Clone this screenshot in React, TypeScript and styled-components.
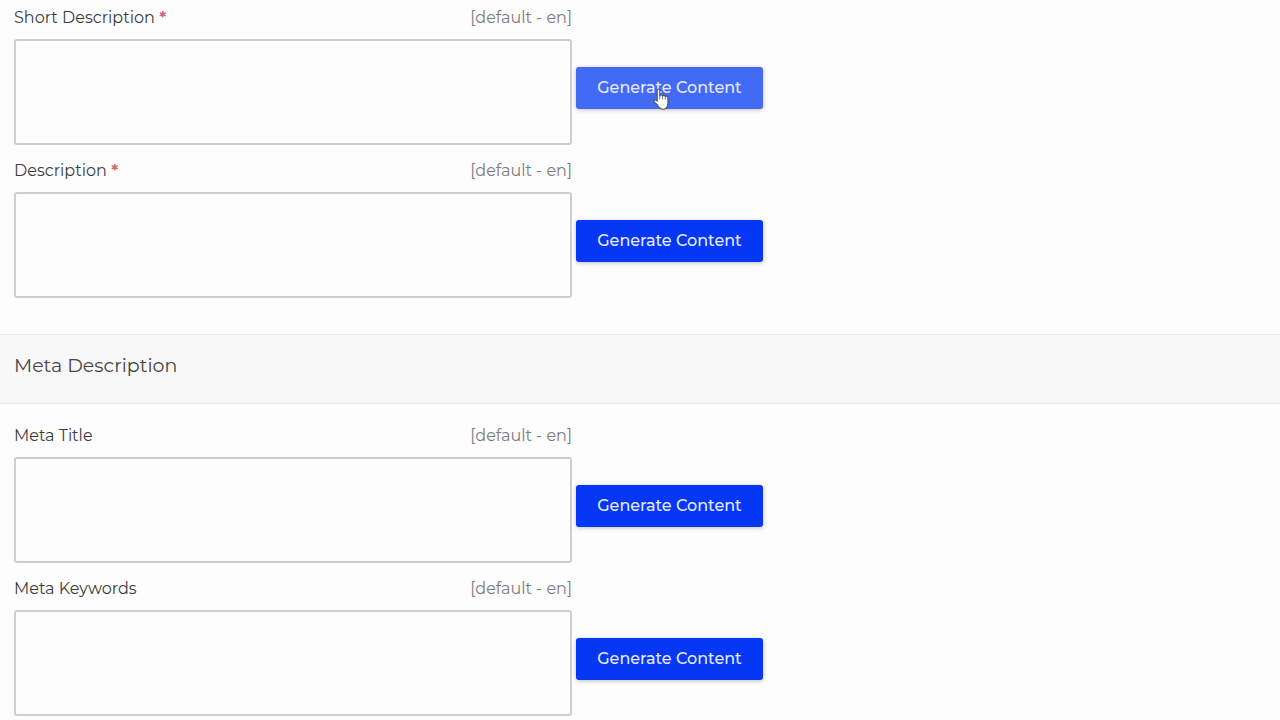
import React, { useId } from 'react';
import styled, { createGlobalStyle } from 'styled-components';

const GlobalStyle = createGlobalStyle`
  *, *::before, *::after { box-sizing: border-box; }
  body {
    margin: 0;
    background: #fdfdfd;
    color: #3c3c3e;
    font-family: Montserrat, Inter, "Liberation Sans", sans-serif;
    font-size: 16px;
    font-weight: 400;
    line-height: 24px;
  }
`;

const Form = styled.form`
  display: flex;
  flex-direction: column;
`;

const Section = styled.section<{ $top: number; $bottom: number }>`
  display: flex;
  flex-direction: column;
  gap: 14px;
  padding: ${(p) => p.$top}px 14px ${(p) => p.$bottom}px;
`;

const SectionHeader = styled.header`
  padding: 18px 14px 24px;
  background: #f8f8f8;
  border-top: 1px solid #e9e9e9;
  border-bottom: 1px solid #ececec;
`;

const SectionTitle = styled.h2`
  margin: 0;
  font-size: 19px;
  font-weight: 400;
  line-height: 26px;
  color: #484445;
`;

const FieldBlock = styled.div`
  display: flex;
  flex-direction: column;
  gap: 9px;
`;

const LabelRow = styled.div`
  display: flex;
  justify-content: space-between;
  width: 100%;
  max-width: 558px;
`;

const Label = styled.label`
  color: #3c3c3e;
`;

const Required = styled.span`
  color: #cf6679;
  font-weight: 700;
`;

const Locale = styled.span`
  color: #7c7c7c;
`;

const InputRow = styled.div`
  display: flex;
  align-items: center;
  gap: 4px;
`;

const TextArea = styled.textarea`
  display: block;
  flex: 0 1 558px;
  min-width: 0;
  height: 106px;
  padding: 8px 12px;
  border: 2px solid #cecece;
  border-radius: 3px;
  background: #fdfdfd;
  color: inherit;
  font: inherit;
  resize: none;
`;

const GenerateButton = styled.button<{ $hovered?: boolean }>`
  position: relative;
  flex: none;
  width: 187px;
  height: 42px;
  margin: 0 0 8px;
  padding: 0;
  border: 0;
  border-radius: 3px;
  background: ${(p) => (p.$hovered ? '#426af5' : '#0537f5')};
  box-shadow: 0 1px 4px rgba(0, 0, 0, 0.25);
  color: #e6eaff;
  font: inherit;
  font-weight: 500;
  cursor: pointer;
`;

const Pointer = styled.svg`
  position: absolute;
  left: 76px;
  top: 21px;
  width: 18px;
  height: 22px;
`;

function HandPointer() {
  return (
    <Pointer viewBox="0 0 18 22" aria-hidden="true">
      <path
        d="M5.2 13.2V2.6c0-2.1 2.6-2.1 2.6 0v5.1c.3-1.3 2.6-1.1 2.8.3.5-1.1 2.5-.8 2.7.6.7-.9 2.6-.4 2.6 1.2v4.4c0 3.2-1.1 7-4.6 7-3.4 0-4.6-2.2-5.9-4.3L2.2 14c-1-1.9 1.1-2.900 3-.8z"
        fill="#fff"
        stroke="#50535e"
        strokeWidth="1.1"
        strokeLinejoin="round"
      />
      <path d="M7.8 7.6V11M10.6 8.3V11M13.3 9v2" stroke="#50535e" strokeWidth="0.8" strokeLinecap="round" />
    </Pointer>
  );
}

interface FieldProps {
  label: string;
  required?: boolean;
  hovered?: boolean;
}

function Field({ label, required, hovered }: FieldProps) {
  const id = useId();
  return (
    <FieldBlock>
      <LabelRow>
        <Label htmlFor={id}>
          {label}
          {required && <Required> *</Required>}
        </Label>
        <Locale>[default - en]</Locale>
      </LabelRow>
      <InputRow>
        <TextArea id={id} required={required} />
        <GenerateButton type="button" $hovered={hovered}>
          Generate Content
          {hovered && <HandPointer />}
        </GenerateButton>
      </InputRow>
    </FieldBlock>
  );
}

export default function App() {
  return (
    <>
      <GlobalStyle />
      <Form>
        <Section $top={6} $bottom={36}>
          <Field label="Short Description" required hovered />
          <Field label="Description" required />
        </Section>
        <SectionHeader>
          <SectionTitle>Meta Description</SectionTitle>
        </SectionHeader>
        <Section $top={20} $bottom={4}>
          <Field label="Meta Title" />
          <Field label="Meta Keywords" />
        </Section>
      </Form>
    </>
  );
}
